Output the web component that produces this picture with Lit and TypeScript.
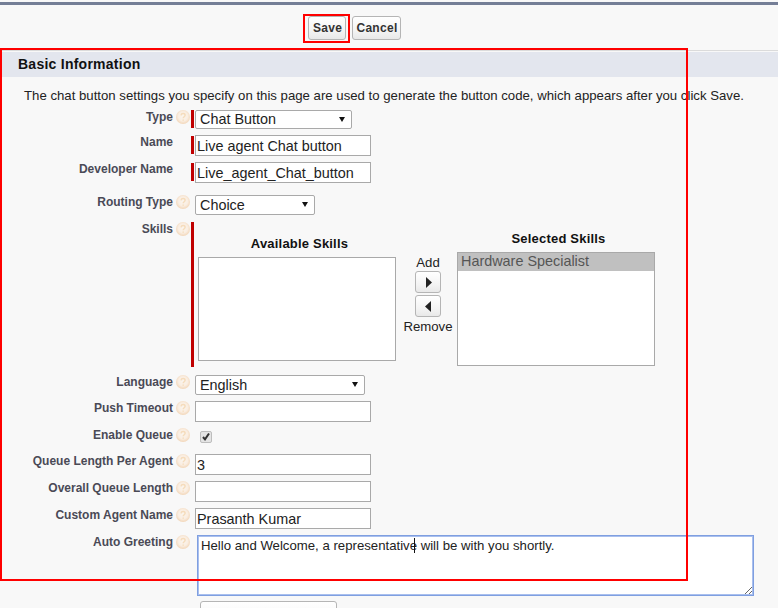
import { LitElement, html, css, svg } from "lit";
import { customElement } from "lit/decorators.js";

const helpIcon = html`<svg class="help" viewBox="0 0 14 14" width="14" height="14" aria-hidden="true">
  <defs><radialGradient id="hg" cx="50%" cy="45%" r="55%"><stop offset="0" stop-color="#fbf5ee"/><stop offset="0.6" stop-color="#faeee2"/><stop offset="1" stop-color="#f2d6b8"/></radialGradient></defs>
  <circle cx="7" cy="7" r="7" fill="url(#hg)"/>
  ${svg`<path d="M5 5.4C5.2 4.2 6 3.6 7.1 3.6c1.2 0 2 .7 2 1.7 0 1.4-1.9 1.5-1.9 3M7.2 9.6v1.2" fill="none" stroke="#f5dcbc" stroke-width="1.5"/>`}
</svg>`;

const arrow = html`<svg class="arrow" viewBox="0 0 6 5" width="6" height="5" aria-hidden="true"><path d="M0 0h6L3 5z" fill="#111"/></svg>`;

@customElement("app-root")
export class AppRoot extends LitElement {
  static styles = css`
    :host { display: block; width: 778px; height: 608px; overflow: hidden; position: relative; background: #f8f8f8; font-family: "Liberation Sans", Arial, sans-serif; }
    .band { height: 3px; margin-top: 2px; background: #747e96; }
    .toolbar { display: flex; gap: 6px; height: 46px; box-sizing: border-box; padding: 11px 0 0 308px; border-bottom: 1px solid #dbdbdb; }
    .btn { height: 24px; box-sizing: border-box; padding: 0 0 0 1px; border: 1px solid #b5b5b5; border-radius: 3px; background: linear-gradient(#ffffff, #f4f4f4 60%, #e8e8e8); font: bold 12px "Liberation Sans", Arial, sans-serif; letter-spacing: 0.3px; color: #333; }
    .save { width: 38px; }
    .cancel { width: 49px; }
    h2 { margin: 1px 0 0; height: 25px; line-height: 25px; padding-left: 18px; background: #e3e6ee; font-size: 14px; letter-spacing: 0.25px; color: #111; }
    p { margin: 11px 0 6px 24px; line-height: 16px; font-size: 13.2px; color: #222; white-space: nowrap; }
    .form { display: flex; flex-direction: column; gap: 6px; }
    .row { display: grid; grid-template-columns: 173px 18px 1fr; height: 21px; }
    .type { height: 19px; }
    .enable, .lang { height: 20px; }
    .routing { margin-top: 6px; }
    .skills { height: 147px; }
    .auto { height: 61px; }
    label { text-align: right; font-size: 12px; font-weight: bold; color: #4a4a56; line-height: 14px; white-space: nowrap; }
    .help { margin: 0 0 0 3px; }
    .field { display: flex; padding-left: 4px; position: relative; }
    .field.req { padding-left: 0; gap: 1px; }
    .bar { width: 3px; height: 18px; background: #c00000; flex: none; margin-top: 1px; }
    .type .bar { margin-top: 0; }
    .skills .bar { height: 145px; margin-top: 0; }
    input[type="text"] { width: 176px; height: 21px; box-sizing: border-box; padding: 0 1px; border: 1px solid #a9a9a9; background: #fff; font: 14.4px "Liberation Sans", Arial, sans-serif; color: #222; outline: none; }
    .sel { position: relative; height: 100%; }
    select { appearance: none; -webkit-appearance: none; display: block; height: 100%; box-sizing: border-box; padding: 0 0 0 4px; border: 1px solid #a9a9a9; border-radius: 2px; background: #fff; font: 14.4px "Liberation Sans", Arial, sans-serif; color: #222; outline: none; }
    .w157 select { width: 157px; height: 19px; padding-bottom: 2px; }
    .w120 select { width: 120px; height: 20px; }
    .w170 select { width: 170px; }
    .arrow { position: absolute; right: 7px; top: 7px; pointer-events: none; }
    .check { width: 12px; height: 12px; margin: 3px 0 0 5px; display: block; box-sizing: border-box; border: 1px solid #bdbdbd; border-radius: 2px; background: #e4e4e4; }
    .check svg { display: block; }
    .inner { display: flex; margin-left: 3px; }
    .col h3 { margin: 0 0 6px; padding-left: 5px; font-size: 13px; line-height: 14px; letter-spacing: 0.2px; text-align: center; color: #111; }
    .avail { width: 198px; padding-top: 15px; }
    .chosen { width: 198px; padding-top: 10px; }
    .box { box-sizing: border-box; width: 198px; border: 1px solid #a9a9a9; background: #fff; }
    .avail .box { height: 104px; }
    .chosen .box { height: 114px; }
    .opt { height: 18px; line-height: 17px; padding-left: 3px; background: #c0c0c0; color: #555; font-size: 14.4px; }
    .mid { width: 61px; box-sizing: border-box; padding: 33px 0 0 3px; display: flex; flex-direction: column; align-items: center; gap: 2px; font-size: 13.2px; color: #222; line-height: 16px; }
    .mid span:first-child { margin-bottom: -2px; }
    .mv { width: 26px; height: 22px; padding: 0; display: flex; align-items: center; justify-content: center; box-sizing: border-box; border: 1px solid #b5b5b5; border-radius: 3px; background: linear-gradient(#fff, #f4f4f4 60%, #e8e8e8); }
    textarea { display: block; margin-left: 2px; width: 557px; height: 61px; box-sizing: border-box; padding: 2px 3px; border: 1px solid #7f9fe0; outline: 1px solid #a9bfee; outline-offset: -2px; background: #fff; font: 13.2px/16px "Liberation Sans", Arial, sans-serif; color: #222; resize: both; }
    .caret { position: absolute; left: 223px; top: 3px; width: 1px; height: 15px; background: #111; }
    .cut { margin: -1px 0 0 200px; width: 137px; height: 20px; box-sizing: border-box; border: 1px solid #b5b5b5; border-radius: 3px; background: linear-gradient(#fff, #f4f4f4); }
    .mark { position: absolute; box-sizing: border-box; border: 2px solid #f00; pointer-events: none; }
    .mark.a { left: 303px; top: 14px; width: 47px; height: 29px; }
    .mark.b { left: 0; top: 48px; width: 688px; height: 533px; }
  `;

  private inputRow(name: string, value: string, req: boolean, help: boolean, cls = "") {
    return html`<div class="row ${cls}">
      <label>${name}</label>
      <span>${help ? helpIcon : ""}</span>
      <div class="field ${req ? "req" : ""}">
        ${req ? html`<span class="bar"></span>` : ""}
        <input type="text" .value=${value} />
      </div>
    </div>`;
  }

  private selectRow(name: string, value: string, width: string, req: boolean, cls: string) {
    return html`<div class="row ${cls}">
      <label>${name}</label>
      <span>${helpIcon}</span>
      <div class="field ${req ? "req" : ""}">
        ${req ? html`<span class="bar"></span>` : ""}
        <div class="sel ${width}"><select><option>${value}</option></select>${arrow}</div>
      </div>
    </div>`;
  }

  render() {
    return html`
      <div class="band"></div>
      <div class="toolbar">
        <button class="btn save">Save</button>
        <button class="btn cancel">Cancel</button>
      </div>
      <h2>Basic Information</h2>
      <p>The chat button settings you specify on this page are used to generate the button code, which appears after you click Save.</p>
      <div class="form">
        ${this.selectRow("Type", "Chat Button", "w157", true, "type")}
        ${this.inputRow("Name", "Live agent Chat button", true, false)}
        ${this.inputRow("Developer Name", "Live_agent_Chat_button", true, false)}
        ${this.selectRow("Routing Type", "Choice", "w120", false, "routing")}
        <div class="row skills">
          <label>Skills</label>
          <span>${helpIcon}</span>
          <div class="field req">
            <span class="bar"></span>
            <div class="inner">
              <div class="col avail"><h3>Available Skills</h3><div class="box"></div></div>
              <div class="mid">
                <span>Add</span>
                <button class="mv"><svg width="7" height="11" viewBox="0 0 7 11"><path d="M1 0l6 5.5L1 11z" fill="#222"/></svg></button>
                <button class="mv"><svg width="7" height="11" viewBox="0 0 7 11"><path d="M6 0L0 5.5 6 11z" fill="#222"/></svg></button>
                <span>Remove</span>
              </div>
              <div class="col chosen"><h3>Selected Skills</h3><div class="box"><div class="opt">Hardware Specialist</div></div></div>
            </div>
          </div>
        </div>
        ${this.selectRow("Language", "English", "w170", false, "lang")}
        ${this.inputRow("Push Timeout", "", false, true)}
        <div class="row enable">
          <label>Enable Queue</label>
          <span>${helpIcon}</span>
          <div class="field">
            <span class="check"><svg width="10" height="10" viewBox="0 0 10 10"><path d="M2 5l2 2.4L8 1.5" fill="none" stroke="#333" stroke-width="2"/></svg></span>
          </div>
        </div>
        ${this.inputRow("Queue Length Per Agent", "3", false, true)}
        ${this.inputRow("Overall Queue Length", "", false, true)}
        ${this.inputRow("Custom Agent Name", "Prasanth Kumar", false, true)}
        <div class="row auto">
          <label>Auto Greeting</label>
          <span>${helpIcon}</span>
          <div class="field">
            <textarea .value=${"Hello and Welcome, a representative will be with you shortly."}></textarea>
            <span class="caret"></span>
          </div>
        </div>
        <div class="cut"></div>
      </div>
      <div class="mark a"></div>
      <div class="mark b"></div>
    `;
  }
}
